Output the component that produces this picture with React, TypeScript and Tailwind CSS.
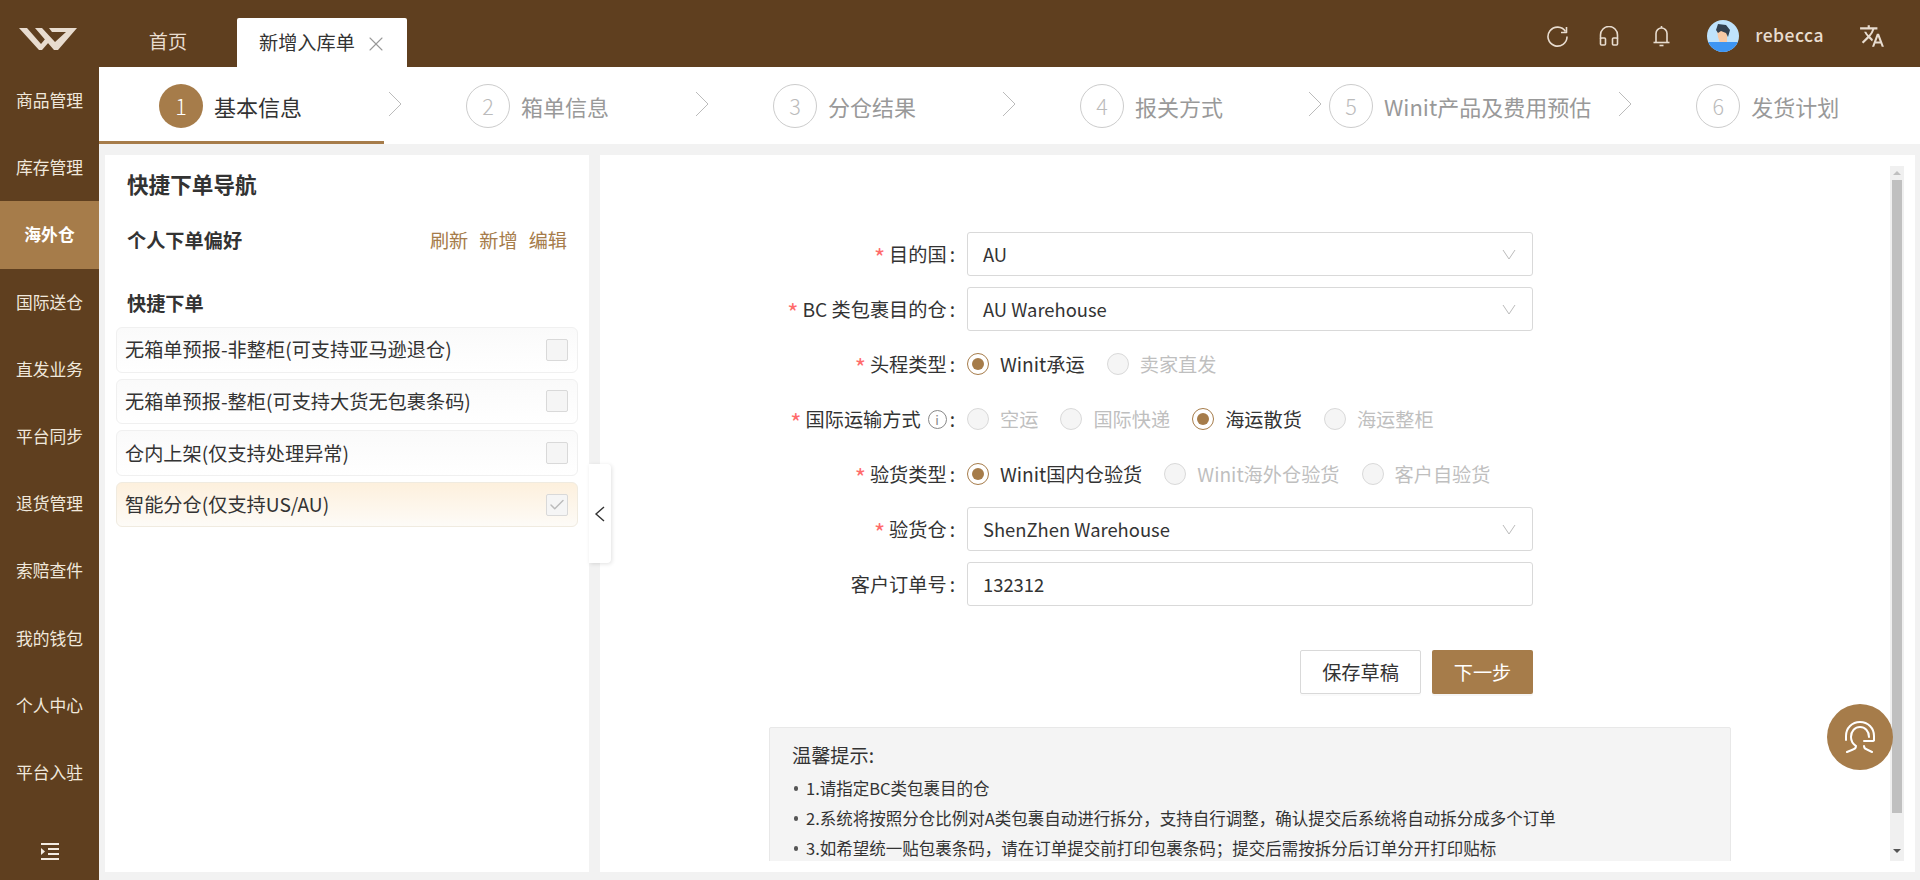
import React from 'react';
import { Check, X } from 'lucide-react';
import { MdTranslate } from 'react-icons/md';

const navItems = ['商品管理', '库存管理', '海外仓', '国际送仓', '直发业务', '平台同步', '退货管理', '索赔查件', '我的钱包', '个人中心', '平台入驻'];

// margin in front of each step's arrow and circle, steps are not evenly spread
const steps = [
  { no: 2, label: '箱单信息', arrowMl: 'ml-[4px]', circleMl: 'ml-[64px]' },
  { no: 3, label: '分仓结果', arrowMl: 'ml-[86px]', circleMl: 'ml-[64px]' },
  { no: 4, label: '报关方式', arrowMl: 'ml-[86px]', circleMl: 'ml-[64px]' },
  { no: 5, label: 'Winit产品及费用预估', arrowMl: 'ml-[85px]', circleMl: 'ml-[7px]' },
  { no: 6, label: '发货计划', arrowMl: 'ml-[27px]', circleMl: 'ml-[64px]' },
];

const quickOrders = [
  { label: '无箱单预报-非整柜(可支持亚马逊退仓)', active: false },
  { label: '无箱单预报-整柜(可支持大货无包裹条码)', active: false },
  { label: '仓内上架(仅支持处理异常)', active: false },
  { label: '智能分仓(仅支持US/AU)', active: true },
];

const Logo = () => (
  <svg width="58" height="22" viewBox="0 0 58 22" fill="#e8dccf">
    <path d="M0 0H8L22 16L27 10L30 14L23 22H20Z" />
    <path d="M16 0H23L36 14L47 4H33L30 0H58L39 22H35Z" />
  </svg>
);

const Avatar = () => (
  <svg width="32" height="32" viewBox="0 0 32 32">
    <defs>
      <clipPath id="av">
        <circle cx="16" cy="16" r="16" />
      </clipPath>
    </defs>
    <g clipPath="url(#av)">
      <rect width="32" height="32" fill="#bfe2fb" />
      <path d="M10 11H20V23H13L11 17Z" fill="#f9c9a4" />
      <path d="M9 10L11 4L19 5L23 10L21 17L19 13L14 11L11 13Z" fill="#33404f" />
      <rect y="22" width="32" height="10" fill="#3d95f3" />
    </g>
  </svg>
);

const HelpAgent = () => (
  <svg width="32" height="32" viewBox="0 0 32 32" fill="none" stroke="#fff" strokeWidth="2" strokeLinecap="round">
    <path d="M2 19v-4C2 7 8 1 16 1s14 6 14 14v4" />
    <path d="M25 16c0-6-4-10-9-10S7 10 7 16c0 4 2 7 5 9 0 2-1 3-3 3.500L3 31" />
    <path d="M20 20h8c1.500 0 2-.5 2-1" />
    <path d="M20 25c0 2 1 3 3 3.500L28 31" />
  </svg>
);

const Arrow = ({ className }: { className: string }) => (
  <svg width="14" height="24" viewBox="0 0 14 24" fill="none" stroke="#bbb" className={className}>
    <path d="M1 0L13 12L1 24" />
  </svg>
);

const Radio = ({ label, checked = false }: { label: string; checked?: boolean }) => (
  <div className="flex items-center gap-[11px] mr-[22px]">
    {checked ? (
      <span className="flex items-center justify-center w-[22px] h-[22px] rounded-full border border-[#a67c4a] bg-white">
        <span className="w-[12px] h-[12px] rounded-full bg-[#a67c4a]" />
      </span>
    ) : (
      <span className="w-[22px] h-[22px] rounded-full border border-[#d9d9d9] bg-[#f5f5f5]" />
    )}
    <span className={checked ? 'text-[#333]' : 'text-[#bfbfbf]'}>{label}</span>
  </div>
);

const Label = ({ text, required = true, info = false }: { text: string; required?: boolean; info?: boolean }) => (
  <div className="w-[355px] mr-[12px] pt-[1px] flex items-center justify-end text-[19.2px] text-[#333]">
    {required && <span className="text-[24px] leading-none mt-[4px] text-[#ff6b6b] mr-[4px]">*</span>}
    <span>{text}</span>
    {info && (
      <span className="ml-[7px] flex items-center justify-center w-[19px] h-[19px] rounded-full border border-[#888] text-[13px] leading-none text-[#888]">
        i
      </span>
    )}
    <span className="ml-[3px]">:</span>
  </div>
);

const SelectBox = ({ value }: { value: string }) => (
  <div className="w-[566px] h-[44px] pl-[15px] pr-[16px] flex items-center justify-between border border-[#d9d9d9] rounded-[3px] bg-white text-[#333] text-[18.4px]">
    <span className="pt-[1px]">{value}</span>
    <svg width="14" height="11" viewBox="0 0 14 11" fill="none" stroke="#bbb">
      <path d="M1 1L7 10L13 1" />
    </svg>
  </div>
);

const App = () => {
  return (
    <div className="flex w-full h-[880px] overflow-hidden bg-[#f2f2f2] font-['Noto_Sans_CJK_SC','Noto_Sans',sans-serif]">
      <aside className="w-[99px] shrink-0 flex flex-col bg-[#5f3f1f] text-[#f0e8dc]">
        <div className="h-[67px] shrink-0 flex items-center justify-center pt-[11px] pr-[3px]">
          <Logo />
        </div>
        {navItems.map((item) => (
          <div
            key={item}
            className={
              item === '海外仓'
                ? 'h-[67.2px] shrink-0 flex items-center justify-center text-[16.8px] font-bold text-white bg-[#a67c4a]'
                : 'h-[67.2px] shrink-0 flex items-center justify-center text-[16.8px]'
            }
          >
            {item}
          </div>
        ))}
        <div className="mt-[37px] flex justify-center">
          <svg width="18" height="17" viewBox="0 0 18 17" fill="#f4ece2">
            <rect width="18" height="2" />
            <rect y="15" width="18" height="2" />
            <rect x="7" y="5" width="11" height="2" />
            <rect x="7" y="10" width="11" height="2" />
            <path d="M0 5l4 3.500L0 12z" />
          </svg>
        </div>
      </aside>

      <div className="flex-1 min-w-0 flex flex-col">
        <header className="h-[67px] shrink-0 flex bg-[#5f3f1f] text-[#e8dccf]">
          <div className="w-[138px] flex items-center justify-center pt-[16px] text-[19.2px]">首页</div>
          <div className="mt-[18px] w-[170px] h-[49px] flex items-center pl-[22px] bg-white rounded-t-[2px] text-[19.2px] text-[#333]">
            新增入库单
            <X size={24} strokeWidth={1.1} className="ml-[9px] mt-[2px] text-[#999]" />
          </div>
          <div className="flex-1 flex items-center justify-end pr-[35px] pt-[5px]">
            <svg width="21" height="21" viewBox="0 0 21 21" fill="none" stroke="currentColor" strokeWidth="1.6" className="mr-[31px]">
              <path d="M18.500 5.500A9.500 9.500 0 1 0 20 10.500" />
              <path d="M19.500 1V6.500H14" strokeLinejoin="round" />
            </svg>
            <svg width="20" height="20" viewBox="0 0 20 20" fill="none" stroke="currentColor" strokeWidth="1.6" className="mr-[34px]">
              <path d="M1.500 13V9a8.500 8.500 0 0 1 17 0v4" />
              <rect x="1.500" y="12" width="5" height="7" rx="1" />
              <rect x="13.500" y="12" width="5" height="7" rx="1" />
            </svg>
            <svg width="17" height="22" viewBox="0 0 17 22" fill="none" stroke="currentColor" strokeWidth="1.6" className="mr-[37px]">
              <path d="M8.500 1v2" />
              <path d="M3 17V8.500a5.500 5.500 0 0 1 11 0V17" />
              <path d="M0.500 17.500h16" />
              <path d="M6.500 20.500h4" />
            </svg>
            <Avatar />
            <span className="ml-[16px] mr-[35px] text-[17.5px] font-medium tracking-[0.5px] -mt-[2px]">rebecca</span>
            <MdTranslate size={26} />
          </div>
        </header>

        <div className="h-[77px] shrink-0 flex bg-white">
          <div className="w-[285px] h-[77px] pl-[60px] pt-[17px] flex items-start border-b-[3px] border-[#a67c4a]">
            <span className="w-[44px] h-[44px] flex items-center justify-center rounded-full bg-[#a67c4a] text-white text-[21.6px] font-light">1</span>
            <span className="ml-[11px] leading-[44px] text-[22px] text-[#333]">基本信息</span>
          </div>
          {steps.map((step) => (
            <div key={step.no} className="flex items-start pt-[17px]">
              <Arrow className={`${step.arrowMl} mt-[8px]`} />
              <span className={`${step.circleMl} w-[44px] h-[44px] flex items-center justify-center rounded-full border border-[#ccc] text-[#bbb] text-[21.6px] font-light`}>
                {step.no}
              </span>
              <span className="ml-[11px] leading-[44px] text-[22px] text-[#999] whitespace-nowrap">{step.label}</span>
            </div>
          ))}
        </div>

        <div className="flex-1 min-h-0 flex gap-[11px] pt-[11px] pl-[6px] pr-[5px] pb-[8px]">
          <section className="relative z-10 w-[484px] shrink-0 bg-white pt-[10px]">
            <h2 className="pl-[22px] text-[21.6px] leading-[38px] font-bold text-[#333]">快捷下单导航</h2>
            <div className="mt-[22px] pl-[22px] pr-[22px] flex items-center justify-between text-[19.2px] leading-[30px]">
              <span className="font-bold text-[#333]">个人下单偏好</span>
              <span className="flex gap-[11px] text-[#a67c4a]">
                <span>刷新</span>
                <span>新增</span>
                <span>编辑</span>
              </span>
            </div>
            <div className="mt-[33px] pl-[22px] text-[19.2px] leading-[30px] font-bold text-[#333]">快捷下单</div>
            <div className="mt-[9px] px-[11px] flex flex-col gap-[6px]">
              {quickOrders.map((order) => (
                <div
                  key={order.label}
                  className={
                    order.active
                      ? 'h-[45.6px] flex items-center justify-between pl-[8px] pr-[9px] rounded-[6px] border border-[#f0ebe0] bg-gradient-to-b from-[#fdf0dd] to-[#fdfbf7] text-[19.2px] text-[#333]'
                      : 'h-[45.6px] flex items-center justify-between pl-[8px] pr-[9px] rounded-[6px] border border-[#f0f0f0] bg-gradient-to-b from-[#fafafa] to-white text-[19.2px] text-[#333]'
                  }
                >
                  <span>{order.label}</span>
                  <span className="w-[22px] h-[22px] flex items-center justify-center rounded-[2px] border border-[#d9d9d9] bg-[#f5f5f5]">
                    {order.active && <Check size={18} strokeWidth={2} className="text-[#bbb]" />}
                  </span>
                </div>
              ))}
            </div>
            <div className="absolute left-full top-[309px] w-[22px] h-[99px] flex items-center justify-center pr-[2px] rounded-r-[4px] bg-white shadow-[1px_1px_4px_rgba(0,0,0,0.12)]">
              <svg width="11" height="16" viewBox="0 0 11 16" fill="none" stroke="#333" strokeWidth="1.4">
                <path d="M10 1L2 8L10 15" />
              </svg>
            </div>
          </section>

          <section className="relative flex-1 min-w-0 flex bg-white py-[11px] pr-[11px]">
            <div className="flex-1 min-w-0 overflow-hidden pt-[66px]">
              <div className="flex flex-col gap-[11px]">
                <div className="flex h-[44px]">
                  <Label text="目的国" />
                  <SelectBox value="AU" />
                </div>
                <div className="flex h-[44px]">
                  <Label text="BC 类包裹目的仓" />
                  <SelectBox value="AU Warehouse" />
                </div>
                <div className="flex h-[44px]">
                  <Label text="头程类型" />
                  <div className="flex items-center pt-[1px] text-[19.2px]">
                    <Radio label="Winit承运" checked />
                    <Radio label="卖家直发" />
                  </div>
                </div>
                <div className="flex h-[44px]">
                  <Label text="国际运输方式" info />
                  <div className="flex items-center pt-[1px] text-[19.2px]">
                    <Radio label="空运" />
                    <Radio label="国际快递" />
                    <Radio label="海运散货" checked />
                    <Radio label="海运整柜" />
                  </div>
                </div>
                <div className="flex h-[44px]">
                  <Label text="验货类型" />
                  <div className="flex items-center pt-[1px] text-[19.2px]">
                    <Radio label="Winit国内仓验货" checked />
                    <Radio label="Winit海外仓验货" />
                    <Radio label="客户自验货" />
                  </div>
                </div>
                <div className="flex h-[44px]">
                  <Label text="验货仓" />
                  <SelectBox value="ShenZhen Warehouse" />
                </div>
                <div className="flex h-[44px]">
                  <Label text="客户订单号" required={false} />
                  <div className="w-[566px] h-[44px] px-[15px] flex items-center border border-[#d9d9d9] rounded-[3px] text-[#333] text-[18.4px]">
                    <span className="pt-[1px]">132312</span>
                  </div>
                </div>
              </div>
              <div className="mt-[44px] ml-[700px] w-[233px] flex gap-[11px]">
                <button className="w-[121px] h-[44px] bg-white border border-[#d9d9d9] rounded-[2px] text-[19.2px] text-[#333] shadow-[0_2px_0_rgba(0,0,0,0.02)]">
                  保存草稿
                </button>
                <button className="w-[101px] h-[44px] bg-[#a67c4a] rounded-[2px] text-[19.2px] text-white shadow-[0_2px_0_rgba(0,0,0,0.04)]">
                  下一步
                </button>
              </div>
              <div className="mt-[33px] ml-[169px] w-[962px] h-[200px] pt-[12px] pl-[22px] bg-[#f4f4f4] border border-[#e8e8e8] rounded-t-[2px] text-[#333]">
                <p className="text-[19.2px] leading-[30px]">温馨提示:</p>
                <ul className="mt-[3px] text-[16.5px] leading-[30px]">
                  {[
                    '1.请指定BC类包裹目的仓',
                    '2.系统将按照分仓比例对A类包裹自动进行拆分，支持自行调整，确认提交后系统将自动拆分成多个订单',
                    '3.如希望统一贴包裹条码，请在订单提交前打印包裹条码；提交后需按拆分后订单分开打印贴标',
                  ].map((tip) => (
                    <li key={tip} className="flex items-center ml-[2px]">
                      <span className="w-[4px] h-[5px] mr-[8px] rounded-full bg-[#555]" />
                      {tip}
                    </li>
                  ))}
                </ul>
              </div>
            </div>

            <div className="w-[14px] shrink-0 flex flex-col items-center bg-[#f0f0f0]">
              <span className="mt-[5px] border-x-[4px] border-x-transparent border-b-[4px] border-b-[#c0c0c0]" />
              <span className="mt-[5px] w-[10px] h-[633px] bg-[#c0c0c0]" />
              <span className="mt-[36px] border-x-[4px] border-x-transparent border-t-[4px] border-t-[#555]" />
            </div>

            <div className="absolute left-[1227px] top-[549px] w-[66px] h-[66px] flex items-center justify-center rounded-full bg-[#a67c4a]">
              <HelpAgent />
            </div>
          </section>
        </div>
      </div>
    </div>
  );
};

export default App;
